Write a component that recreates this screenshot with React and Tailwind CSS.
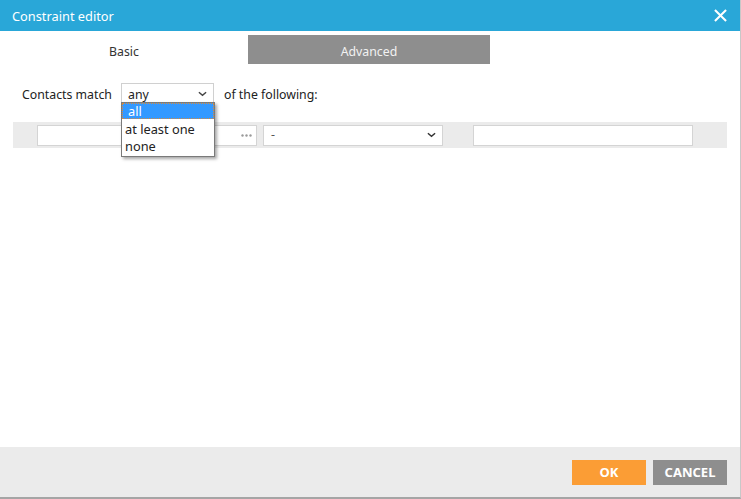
import React from 'react';

const font = { fontFamily: '"Noto Sans", "Open Sans", sans-serif' };

const Chevron = ({ className }) => (
  <svg viewBox="0 0 10 6" className={className} fill="none" stroke="currentColor" strokeWidth="1.6">
    <path d="M1 1l4 3.5L9 1" />
  </svg>
);

const App = () => {
  return (
    <div className="w-[741px] h-[499px] bg-white flex flex-col text-[12.3px] text-[#222]" style={font}>
      <div className="flex flex-col w-[741px] h-[499px] border-r border-[#c8c8c8] border-b-2 border-b-[#a5a5a5]">
        {/* header */}
        <div className="h-[31px] bg-[#29a7d8] flex items-center justify-between pl-3 pr-[13px] shrink-0">
          <span className="text-white text-[12.8px] pt-[2px]">Constraint editor</span>
          <svg viewBox="0 0 14 14" className="w-[13px] h-[13px]" stroke="white" strokeWidth="2.2" fill="none">
            <path d="M1 1l12 12M13 1L1 13" />
          </svg>
        </div>

        {/* tabs */}
        <div className="flex mt-1 h-[29px] shrink-0">
          <div className="w-[248px] flex items-center justify-center text-[#333] pt-[5px]">Basic</div>
          <div className="w-[242px] bg-[#8e8e8e] flex items-center justify-center text-[#f2f2f2] pt-[5px]">Advanced</div>
        </div>

        <div className="flex-1 relative">
          {/* match row */}
          <div className="flex items-center mt-[19px] h-[21px]">
            <span className="pl-[22px] w-[121px] pt-[4px]">Contacts match</span>
            <div className="relative w-[93px] h-[21px] border border-[#d0d0d0] flex items-center justify-between pl-[6px] pr-[6px] bg-white">
              <span className="pt-[3px]">any</span>
              <Chevron className="w-[9px] h-[6px] text-[#444]" />
              <div className="absolute left-[-1px] top-[18px] w-[94px] bg-white border border-[#7a7a7a] shadow-[2px_2px_3px_rgba(0,0,0,0.35)] z-10 flex flex-col leading-[16px] text-[12.8px]">
                <div className="bg-[#3399ff] text-white px-[5px] border border-dotted border-[#d98a3a] h-[16px] flex items-center">all</div>
                <div className="h-[17px] mt-[1px] px-[3px] flex items-center">at least one</div>
                <div className="h-[17px] px-[3px] flex items-center mb-[2px]">none</div>
              </div>
            </div>
            <span className="pl-[10px] pt-[4px]">of the following:</span>
          </div>

          {/* constraint row */}
          <div className="mx-[13px] mt-[18px] h-[26px] bg-[#ebebeb] flex items-center">
            <div className="ml-[24px] w-[220px] h-[21px] bg-white border border-[#d4d4d4] flex items-center justify-end pr-[4px]">
              <svg viewBox="0 0 11 3" className="w-[11px] h-[3px]" fill="#9a9a9a">
                <circle cx="1.5" cy="1.5" r="1.2" />
                <circle cx="5.5" cy="1.5" r="1.2" />
                <circle cx="9.5" cy="1.5" r="1.2" />
              </svg>
            </div>
            <div className="ml-[6px] w-[180px] h-[21px] bg-white border border-[#d4d4d4] flex items-center justify-between pl-[7px] pr-[6px]">
              <span className="text-[#555]">-</span>
              <Chevron className="w-[9px] h-[6px] text-[#333]" />
            </div>
            <div className="ml-[30px] w-[220px] h-[21px] bg-white border border-[#d4d4d4]"></div>
          </div>
        </div>

        {/* footer */}
        <div className="h-[50px] bg-[#ebebeb] flex items-center justify-end pr-[13px] gap-[7px] shrink-0">
          <button className="w-[74px] h-[25px] bg-[#fb9d35] text-white font-bold text-[13px] pt-[1px]">OK</button>
          <button className="w-[74px] h-[25px] bg-[#8e8e8e] text-white font-bold text-[13px] pt-[1px]">CANCEL</button>
        </div>
      </div>
    </div>
  );
};

export default App;
